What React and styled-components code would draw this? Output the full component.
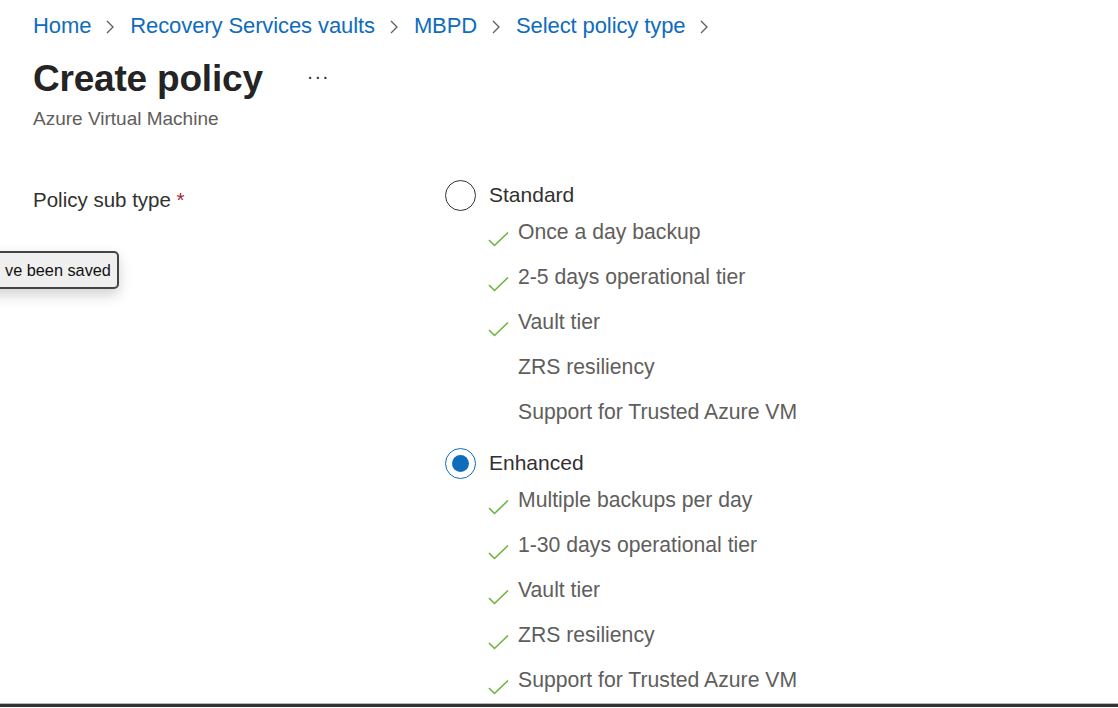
import styled, { createGlobalStyle } from "styled-components";

const GlobalStyle = createGlobalStyle`
  html, body {
    margin: 0;
    padding: 0;
    background: #ffffff;
    overflow: hidden;
  }
  body {
    font-family: "Liberation Sans", Arial, sans-serif;
  }
`;

const crumbs = ["Home", "Recovery Services vaults", "MBPD", "Select policy type"];

const options = [
  {
    name: "Standard",
    selected: false,
    features: [
      { text: "Once a day backup", ok: true },
      { text: "2-5 days operational tier", ok: true },
      { text: "Vault tier", ok: true },
      { text: "ZRS resiliency", ok: false },
      { text: "Support for Trusted Azure VM", ok: false },
    ],
  },
  {
    name: "Enhanced",
    selected: true,
    features: [
      { text: "Multiple backups per day", ok: true },
      { text: "1-30 days operational tier", ok: true },
      { text: "Vault tier", ok: true },
      { text: "ZRS resiliency", ok: true },
      { text: "Support for Trusted Azure VM", ok: true },
    ],
  },
];

function Chevron() {
  return (
    <svg width="10" height="16" viewBox="0 0 10 16">
      <path d="M2 2 L8 8 L2 14" fill="none" stroke="#605e5c" strokeWidth="1.3" />
    </svg>
  );
}

function Check() {
  return (
    <svg width="22" height="16" viewBox="0 0 22 16">
      <path d="M2 9 L7.5 14.5 L21 1.5" fill="none" stroke="#6bb33a" strokeWidth="1.6" />
    </svg>
  );
}

export default function App() {
  return (
    <Page>
      <GlobalStyle />
      <Content>
        <Breadcrumb>
          {crumbs.map((c) => (
            <Crumb key={c}>
              <CrumbLink href="#">{c}</CrumbLink>
              <Chevron />
            </Crumb>
          ))}
        </Breadcrumb>
        <TitleRow>
          <Title>Create policy</Title>
          <More>···</More>
        </TitleRow>
        <Subtitle>Azure Virtual Machine</Subtitle>
        <FormRow>
          <Label>
            Policy sub type <Required>*</Required>
          </Label>
          <Options>
            {options.map((o) => (
              <Option key={o.name}>
                <RadioLine>
                  <Radio $selected={o.selected} />
                  <RadioText>{o.name}</RadioText>
                </RadioLine>
                <Features>
                  {o.features.map((f) => (
                    <Feature key={f.text}>
                      <CheckSlot>{f.ok && <Check />}</CheckSlot>
                      <FeatureText>{f.text}</FeatureText>
                    </Feature>
                  ))}
                </Features>
              </Option>
            ))}
          </Options>
        </FormRow>
      </Content>
      <Toast>ve been saved</Toast>
      <BottomEdge />
    </Page>
  );
}

const Page = styled.div`
  position: relative;
  height: 708px;
  display: flex;
  flex-direction: column;
  overflow: hidden;
`;

const Content = styled.div`
  flex: 1;
  min-height: 0;
  overflow: hidden;
  padding: 12px 0 0 33px;
`;

const Breadcrumb = styled.nav`
  display: flex;
  align-items: center;
  height: 28px;
`;

const Crumb = styled.span`
  display: flex;
  align-items: center;
  gap: 14px;
  margin-right: 15px;
  svg {
    margin-top: 1px;
  }
`;

const CrumbLink = styled.a`
  font-size: 22px;
  color: #0f6cbd;
  text-decoration: none;
  letter-spacing: -0.1px;
`;

const TitleRow = styled.div`
  display: flex;
  align-items: center;
  margin-top: 17px;
  height: 44px;
`;

const Title = styled.h1`
  margin: 0;
  font-size: 37px;
  font-weight: 700;
  color: #242424;
  letter-spacing: -0.2px;
`;

const More = styled.span`
  margin-left: 44px;
  font-size: 20px;
  color: #323130;
  letter-spacing: 1px;
  position: relative;
  top: -3px;
`;

const Subtitle = styled.div`
  margin-top: 7px;
  font-size: 19px;
  color: #605e5c;
`;

const FormRow = styled.div`
  display: flex;
  margin-top: 46px;
`;

const Label = styled.div`
  width: 412px;
  font-size: 20.5px;
  color: #323130;
  padding-top: 12px;
`;

const Required = styled.span`
  color: #a4262c;
`;

const Options = styled.div`
  display: flex;
  flex-direction: column;
  gap: 10px;
`;

const Option = styled.div`
  display: flex;
  flex-direction: column;
`;

const RadioLine = styled.div`
  display: flex;
  align-items: center;
  gap: 13px;
  height: 38px;
`;

const Radio = styled.span`
  box-sizing: border-box;
  width: 31px;
  height: 31px;
  border-radius: 50%;
  border: 1.5px solid ${(p) => (p.$selected ? "#0f6cbd" : "#323130")};
  display: flex;
  align-items: center;
  justify-content: center;
  &::after {
    content: "";
    display: ${(p) => (p.$selected ? "block" : "none")};
    width: 17px;
    height: 17px;
    border-radius: 50%;
    background: #0f6cbd;
  }
`;

const RadioText = styled.span`
  font-size: 21px;
  color: #323130;
`;

const Features = styled.ul`
  list-style: none;
  margin: -5px 0 0;
  padding: 0 0 0 42px;
`;

const Feature = styled.li`
  display: flex;
  align-items: center;
  height: 45px;
`;

const CheckSlot = styled.span`
  width: 31px;
  height: 16px;
  display: flex;
  align-items: flex-start;
  position: relative;
  top: 7px;
`;

const FeatureText = styled.span`
  font-size: 21.2px;
  color: #605e5c;
`;

const Toast = styled.div`
  position: absolute;
  top: 251px;
  left: -20px;
  white-space: nowrap;
  box-sizing: border-box;
  height: 38px;
  padding: 0 6px 0 23px;
  display: flex;
  align-items: center;
  font-size: 16.3px;
  color: #111;
  background: #efefef;
  border: 2px solid #444;
  border-radius: 5px;
  box-shadow: 0 6px 14px rgba(0, 0, 0, 0.18);
`;

const BottomEdge = styled.div`
  height: 3px;
  border-top: 1px solid #b8b8b8;
  background: #333333;
  margin-bottom: 1px;
`;
